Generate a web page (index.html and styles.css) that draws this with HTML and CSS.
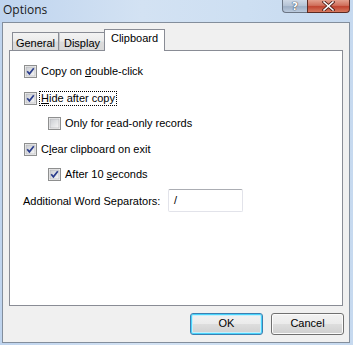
FILE: index.html
```html
<!DOCTYPE html>
<html>
<head>
<meta charset="utf-8">
<link rel="stylesheet" href="styles.css">
</head>
<body>
<div class="window">
  <div class="titlebar">
    <span class="title">Options</span>
    <div class="caption-btns">
      <div class="cap help"><span>?</span></div>
      <div class="cap close">
        <svg width="13" height="10" viewBox="0 0 13 10"><path d="M2 1 L11 9 M11 1 L2 9" stroke="#4a1a14" stroke-width="3.2" stroke-linecap="square"/><path d="M2 1 L11 9 M11 1 L2 9" stroke="#ffffff" stroke-width="1.6" stroke-linecap="square"/></svg>
      </div>
    </div>
  </div>
  <div class="client">
    <div class="tabs">
      <div class="tab t-general">General</div>
      <div class="tab t-display">Display</div>
      <div class="tab selected">Clipboard</div>
    </div>
    <div class="panel">
      <div class="row r1">
        <span class="cb checked"><svg width="13" height="13" viewBox="0 0 13 13"><use href="#box"/><path d="M3.2 6.2 L5.4 8.8 L9.8 3.2" class="chk"/></svg></span>
        <span class="lbl">Copy on <u>d</u>ouble-click</span>
      </div>
      <div class="row r2">
        <span class="cb checked"><svg width="13" height="13" viewBox="0 0 13 13"><use href="#box"/><path d="M3.2 6.2 L5.4 8.8 L9.8 3.2" class="chk"/></svg></span>
        <span class="lbl focus"><u>H</u>ide after copy</span>
      </div>
      <div class="row r3 indent">
        <span class="cb"><svg width="13" height="13" viewBox="0 0 13 13"><use href="#box"/></svg></span>
        <span class="lbl">Only for <u>r</u>ead-only records</span>
      </div>
      <div class="row r4">
        <span class="cb checked"><svg width="13" height="13" viewBox="0 0 13 13"><use href="#box"/><path d="M3.2 6.2 L5.4 8.8 L9.8 3.2" class="chk"/></svg></span>
        <span class="lbl">C<u>l</u>ear clipboard on exit</span>
      </div>
      <div class="row r5 indent">
        <span class="cb checked"><svg width="13" height="13" viewBox="0 0 13 13"><use href="#box"/><path d="M3.2 6.2 L5.4 8.8 L9.8 3.2" class="chk"/></svg></span>
        <span class="lbl">After 10 <u>s</u>econds</span>
      </div>
      <div class="field">
        <span class="flabel">Additional Word Separators:</span>
        <span class="input">/</span>
      </div>
    </div>
    <div class="buttons">
      <div class="btn default">OK</div>
      <div class="btn">Cancel</div>
    </div>
  </div>
</div>
<svg width="0" height="0" class="defs">
  <defs>
    <linearGradient id="ig" x1="0" y1="0" x2="1" y2="1">
      <stop offset="0" stop-color="#c9ccd1"/>
      <stop offset="1" stop-color="#f7f7f7"/>
    </linearGradient>
    <g id="box">
      <rect x="0.5" y="0.5" width="12" height="12" fill="#f5f5f5" stroke="#8e8f8f"/>
      <rect x="2" y="2" width="9" height="9" fill="url(#ig)" stroke="#aeb0b3" stroke-width="0.6"/>
    </g>
  </defs>
</svg>
</body>
</html>
```

FILE: styles.css
```css
html, body {
  margin: 0;
  padding: 0;
}
body {
  width: 353px;
  height: 345px;
  overflow: hidden;
  font-family: "Liberation Sans", Arial, sans-serif;
  font-size: 11px;
  color: #000;
}
.defs {
  position: absolute;
}
.window {
  width: 353px;
  height: 345px;
  display: flex;
  flex-direction: column;
  background: linear-gradient(to right, #bfd4ee 0%, #d3e2f3 40%, #cddff2 70%, #c6d9ef 100%);
}
.titlebar {
  height: 22px;
  display: flex;
  justify-content: space-between;
  align-items: flex-start;
}
.title {
  font-family: "Open Sans", "Noto Sans", sans-serif;
  font-size: 12px;
  line-height: 16px;
  padding: 2px 0 0 3px;
  color: #1a1a1a;
}
.caption-btns {
  display: flex;
  margin-right: 3px;
}
.cap {
  height: 13px;
  box-sizing: border-box;
  border: 1px solid #6b7584;
  border-top: none;
  display: flex;
  align-items: center;
  justify-content: center;
}
.help {
  width: 25px;
  border-radius: 0 0 0 4px;
  border-right: none;
  background: linear-gradient(#cfd9e6, #b4c2d4 50%, #9eafc5 55%, #bccbde);
}
.help span {
  font-family: "DejaVu Sans", sans-serif;
  font-weight: bold;
  font-size: 11px;
  line-height: 11px;
  color: #fff;
  text-shadow: 0 0 1px #2a3444, 0 0 1px #2a3444;
}
.close {
  width: 43px;
  border-radius: 0 0 4px 0;
  border-color: #5b2a22;
  background: linear-gradient(#e3a08e, #d0705c 45%, #c04430 55%, #d7795f);
}
.client {
  flex: 1;
  margin: 0 3px 2px 2px;
  border: 1px solid #838e9c;
  background: #f0f0f0;
  padding: 6px 6px 0 6px;
  display: flex;
  flex-direction: column;
}
.tabs {
  height: 22px;
  display: flex;
  align-items: flex-end;
  padding-left: 3px;
  margin-bottom: -1px;
}
.tab {
  box-sizing: border-box;
  height: 19px;
  border: 1px solid #898c95;
  border-bottom: none;
  background: linear-gradient(#f3f3f3, #ebebeb 45%, #dcdcdc 50%, #d9d9d9);
  text-align: center;
  line-height: 18px;
  padding-top: 1px;
  color: #000;
}
.t-general {
  width: 47px;
}
.t-display {
  width: 46px;
  border-left-color: #c6c8cc;
}
.tab.selected {
  position: relative;
  z-index: 1;
  width: 61px;
  height: 22px;
  margin-left: -1px;
  background: #fff;
  line-height: 16px;
  padding-top: 0;
}
.panel {
  height: 256px;
  box-sizing: border-box;
  border: 1px solid #898c95;
  background: #fff;
  display: flex;
  flex-direction: column;
  padding-left: 14px;
}
.row {
  height: 13px;
  display: flex;
  align-items: center;
}
.r1 { margin-top: 14px; }
.r2 { margin-top: 14px; }
.r3 { margin-top: 12px; }
.r4 { margin-top: 13px; }
.r5 { margin-top: 12px; }
.indent {
  margin-left: 24px;
}
.cb {
  width: 13px;
  height: 13px;
  display: block;
  flex: none;
}
.cb svg {
  display: block;
}
.chk {
  fill: none;
  stroke: #2b3d8c;
  stroke-width: 1.7;
}
.lbl {
  margin-left: 4px;
  line-height: 13px;
  white-space: nowrap;
}
.lbl u {
  text-decoration-thickness: 1px;
  text-underline-offset: 1px;
}
.focus {
  outline: 1px dotted #000;
  outline-offset: 0;
  padding: 0 1px;
  margin-left: 3px;
}
.field {
  margin-top: 8px;
  margin-left: -1px;
  display: flex;
  align-items: center;
}
.flabel {
  width: 145px;
  white-space: nowrap;
}
.input {
  box-sizing: border-box;
  width: 75px;
  height: 23px;
  border: 1px solid #e2e3ea;
  border-top-color: #abadb3;
  border-radius: 2px;
  padding-left: 5px;
  line-height: 20px;
  background: #fff;
}
.buttons {
  margin-top: 7px;
  display: flex;
  justify-content: flex-end;
  gap: 8px;
  margin-right: -1px;
}
.btn {
  box-sizing: border-box;
  width: 73px;
  height: 22px;
  border: 1px solid #707070;
  border-radius: 3px;
  background: linear-gradient(#f2f2f2, #ebebeb 48%, #dddddd 52%, #cfcfcf);
  box-shadow: inset 0 0 0 1px #fbfbfb;
  text-align: center;
  line-height: 19px;
}
.btn.default {
  border-color: #3c7fb1;
  box-shadow: inset 0 0 0 1px #48d3fb, inset 0 0 0 2px #c4eefc;
}
```
